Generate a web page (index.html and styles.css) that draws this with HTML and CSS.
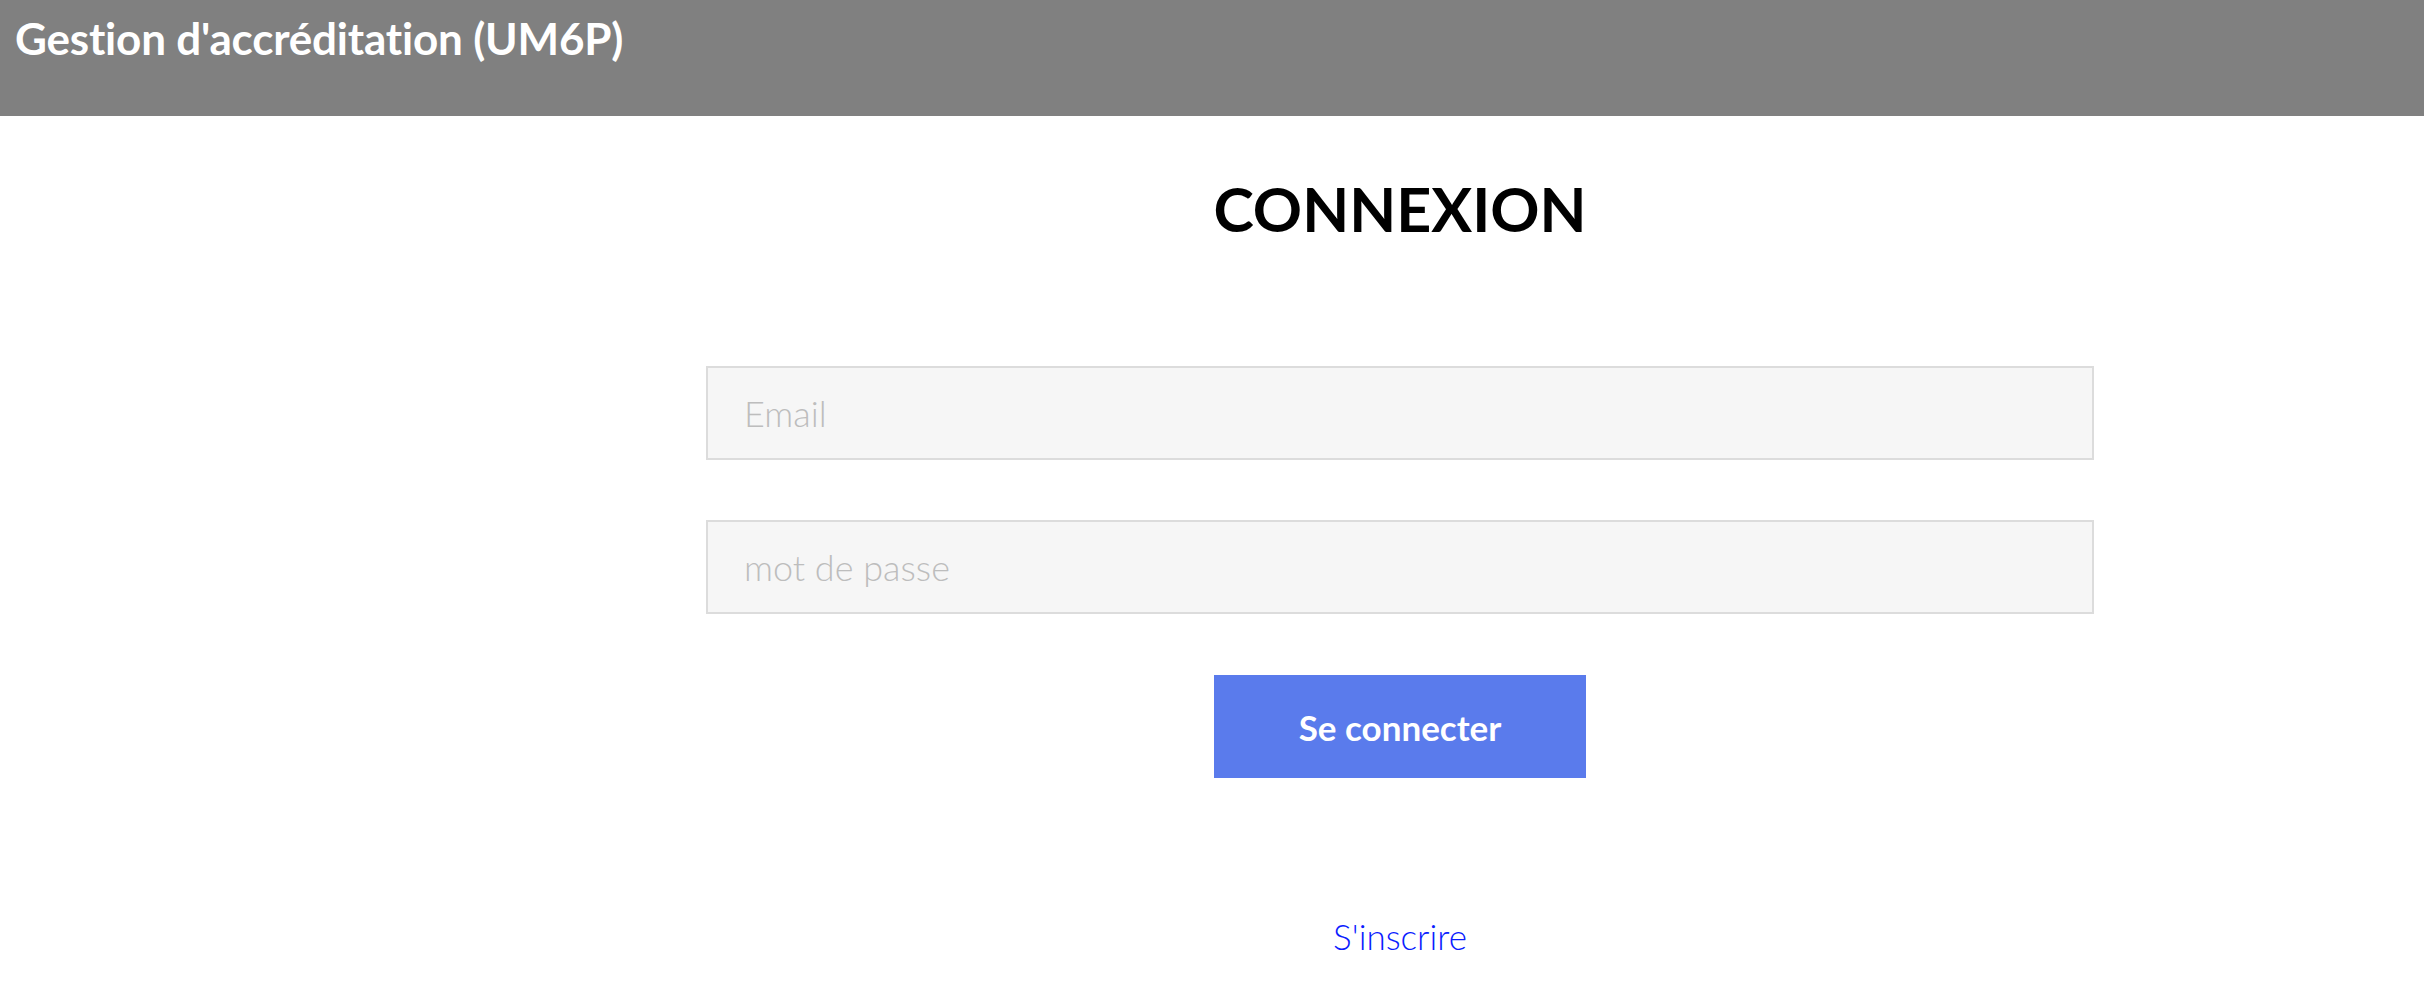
FILE: index.html
```html
<!DOCTYPE html>
<html lang="fr">
<head>
<meta charset="utf-8">
<title>Gestion d'accréditation (UM6P)</title>
<link rel="stylesheet" href="styles.css">
</head>
<body>
<header class="topbar">
  <h1 class="brand">Gestion d'accréditation (UM6P)</h1>
</header>
<main class="login">
  <h2 class="login-title">CONNEXION</h2>
  <form class="login-form">
    <input class="field" type="email" placeholder="Email">
    <input class="field" type="password" placeholder="mot de passe">
    <button class="submit" type="button">Se connecter</button>
  </form>
  <a class="signup" href="#">S'inscrire</a>
</main>
</body>
</html>
```
FILE: styles.css
```css
* { box-sizing: border-box; }
html, body { margin: 0; padding: 0; background: #fff; }
body {
  font-family: Lato, "Noto Sans", "Liberation Sans", sans-serif;
  font-variant-ligatures: none;
}

.topbar {
  height: 116px;
  background: #808080;
  padding: 16px 0 0 15px;
}
.brand {
  margin: 0;
  font-size: 44px;
  line-height: 1;
  font-weight: 700;
  letter-spacing: -0.2px;
  color: #fff;
}

.login {
  width: 1388px;
  margin-left: 706px;
  display: flex;
  flex-direction: column;
  align-items: center;
}
.login-title {
  margin: 62px 0 0;
  font-size: 61px;
  line-height: 1;
  font-weight: 700;
  color: #000;
}
.login-form {
  width: 100%;
  margin-top: 127px;
  display: flex;
  flex-direction: column;
  align-items: center;
}
.field {
  width: 100%;
  height: 94px;
  border: 2px solid #dcdcdc;
  background: #f6f6f6;
  padding: 0 36px;
  font-family: inherit;
  font-weight: 300;
  font-size: 36px;
  color: #333;
  outline: none;
}
.field + .field { margin-top: 60px; }
.field::placeholder { color: #bdbdbd; opacity: 1; }
.submit {
  margin-top: 61px;
  width: 372px;
  height: 103px;
  border: 0;
  background: #5a7bec;
  color: #fff;
  font-family: inherit;
  font-weight: 700;
  font-size: 35px;
  cursor: pointer;
}
.signup {
  margin-top: 141px;
  font-size: 35px;
  line-height: 1;
  font-weight: 300;
  color: #0b1cff;
  text-decoration: none;
}
```
